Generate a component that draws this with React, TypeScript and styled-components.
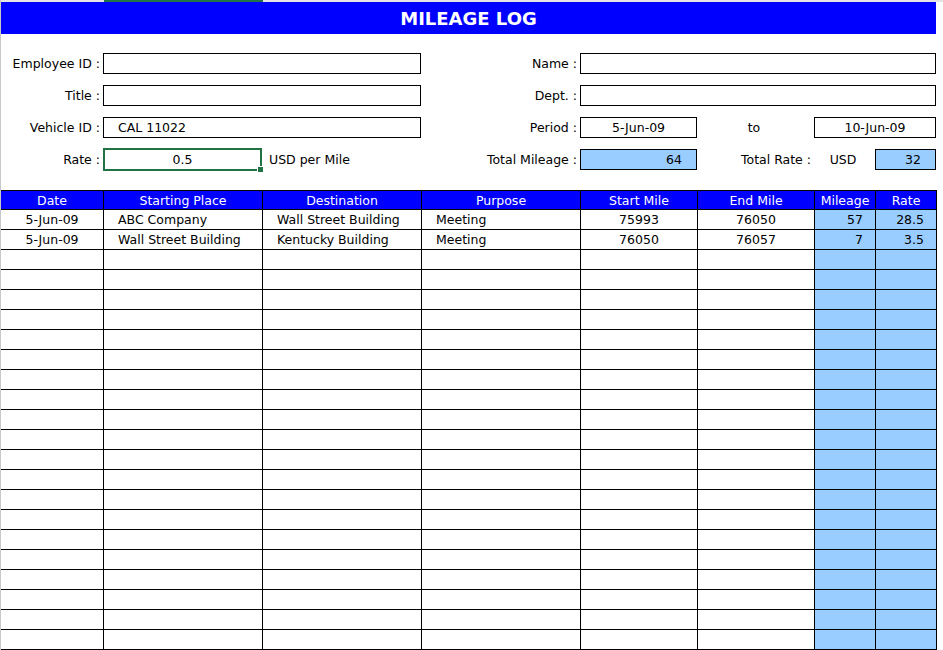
import React from "react";
import styled, { createGlobalStyle } from "styled-components";

const Global = createGlobalStyle`
  body { margin: 0; background: #fff; font-family: "DejaVu Sans", Verdana, sans-serif; font-size: 12.5px; color: #000; }
`;

const COLS = "103px 159px 159px 159px 117px 117px 61px 61px 7px";

const Page = styled.div`
  width: 943px;
  height: 650px;
  overflow: hidden;
  border-left: 1px solid #c8c8c8;
  box-sizing: border-box;
`;
const TopStrip = styled.div`
  height: 2px;
  display: grid;
  grid-template-columns: ${COLS};
  background: #e4e4e4;
`;
const GreenMark = styled.div`
  grid-column: 2;
  background: #217346;
`;
const Title = styled.div`
  width: 935px;
  height: 32px;
  background: #0000ff;
  color: #fff;
  font-weight: bold;
  font-size: 18px;
  display: flex;
  align-items: center;
  justify-content: center;
`;
const Form = styled.div`
  display: grid;
  grid-template-columns: ${COLS};
  grid-auto-rows: 32px;
  margin-top: 13px;
  margin-left: -1px;
`;
const Label = styled.div<{ $col: string; $align?: string }>`
  grid-column: ${(p) => p.$col};
  display: flex;
  align-items: center;
  justify-content: ${(p) => p.$align || "flex-end"};
  padding-right: 3px;
  white-space: nowrap;
`;
const Box = styled.div<{ $col: string; $blue?: boolean; $align?: string }>`
  grid-column: ${(p) => p.$col};
  align-self: center;
  height: 21px;
  border: 1px solid #000;
  box-sizing: border-box;
  background: ${(p) => (p.$blue ? "#99ccff" : "#fff")};
  display: flex;
  align-items: center;
  justify-content: ${(p) => p.$align || "center"};
  padding: 0 ${(p) => (p.$align === "flex-end" ? "14px" : "14px")};
  white-space: nowrap;
`;
const RateBox = styled.div`
  grid-column: 2;
  align-self: center;
  height: 23px;
  border: 2px solid #217346;
  box-sizing: border-box;
  display: flex;
  align-items: center;
  justify-content: center;
  position: relative;
  &::after {
    content: "";
    position: absolute;
    right: -4px;
    bottom: -4px;
    width: 5px;
    height: 5px;
    background: #217346;
    border: 1px solid #fff;
  }
`;
const Table = styled.div`
  display: grid;
  grid-template-columns: 103px 159px 159px 159px 117px 117px 61px 61px;
  grid-auto-rows: 20px;
  margin-top: 15px;
  margin-left: -1px;
  width: 937px;
  border-left: 1px solid #000;
  box-sizing: border-box;
`;
const Head = styled.div`
  background: #0000ff;
  color: #fff;
  display: flex;
  align-items: center;
  justify-content: center;
  border-right: 1px solid #000;
  border-bottom: 1px solid #000;
  border-top: 1px solid #000;
  box-sizing: border-box;
`;
const Cell = styled.div<{ $blue?: boolean; $align?: string }>`
  background: ${(p) => (p.$blue ? "#99ccff" : "#fff")};
  display: flex;
  align-items: center;
  justify-content: ${(p) => p.$align || "center"};
  padding: 0 ${(p) => (p.$align === "flex-start" ? "14px" : p.$align === "flex-end" ? "12px" : "0")};
  border-right: 1px solid #000;
  border-bottom: 1px solid #000;
  box-sizing: border-box;
  white-space: nowrap;
`;

const heads = ["Date", "Starting Place", "Destination", "Purpose", "Start Mile", "End Mile", "Mileage", "Rate"];
const data = [
  ["5-Jun-09", "ABC Company", "Wall Street Building", "Meeting", "75993", "76050", "57", "28.5"],
  ["5-Jun-09", "Wall Street Building", "Kentucky Building", "Meeting", "76050", "76057", "7", "3.5"],
];
const aligns = ["center", "flex-start", "flex-start", "flex-start", "center", "center", "flex-end", "flex-end"];

export default function App() {
  const rows = [...data];
  while (rows.length < 22) rows.push(["", "", "", "", "", "", "", ""]);
  return (
    <Page>
      <Global />
      <TopStrip><GreenMark /></TopStrip>
      <Title>MILEAGE LOG</Title>
      <Form>
        <Label $col="1">Employee ID :</Label>
        <Box $col="2 / 4" />
        <Label $col="4">Name :</Label>
        <Box $col="5 / 9" />

        <Label $col="1">Title :</Label>
        <Box $col="2 / 4" />
        <Label $col="4">Dept. :</Label>
        <Box $col="5 / 9" />

        <Label $col="1">Vehicle ID :</Label>
        <Box $col="2 / 4" $align="flex-start">CAL 11022</Box>
        <Label $col="4">Period :</Label>
        <Box $col="5">5-Jun-09</Box>
        <Label $col="6" $align="center">to</Label>
        <Box $col="7 / 9">10-Jun-09</Box>

        <Label $col="1">Rate :</Label>
        <RateBox>0.5</RateBox>
        <Label $col="3" $align="flex-start" style={{ paddingLeft: 7 }}>USD per Mile</Label>
        <Label $col="4">Total Mileage :</Label>
        <Box $col="5" $blue $align="flex-end">64</Box>
        <Label $col="6">Total Rate :</Label>
        <Label $col="7" $align="center">USD</Label>
        <Box $col="8" $blue $align="flex-end">32</Box>
      </Form>
      <Table>
        {heads.map((h) => <Head key={h}>{h}</Head>)}
        {rows.map((r, i) =>
          r.map((v, j) => (
            <Cell key={i + "-" + j} $blue={j >= 6} $align={aligns[j]}>{v}</Cell>
          ))
        )}
      </Table>
    </Page>
  );
}
